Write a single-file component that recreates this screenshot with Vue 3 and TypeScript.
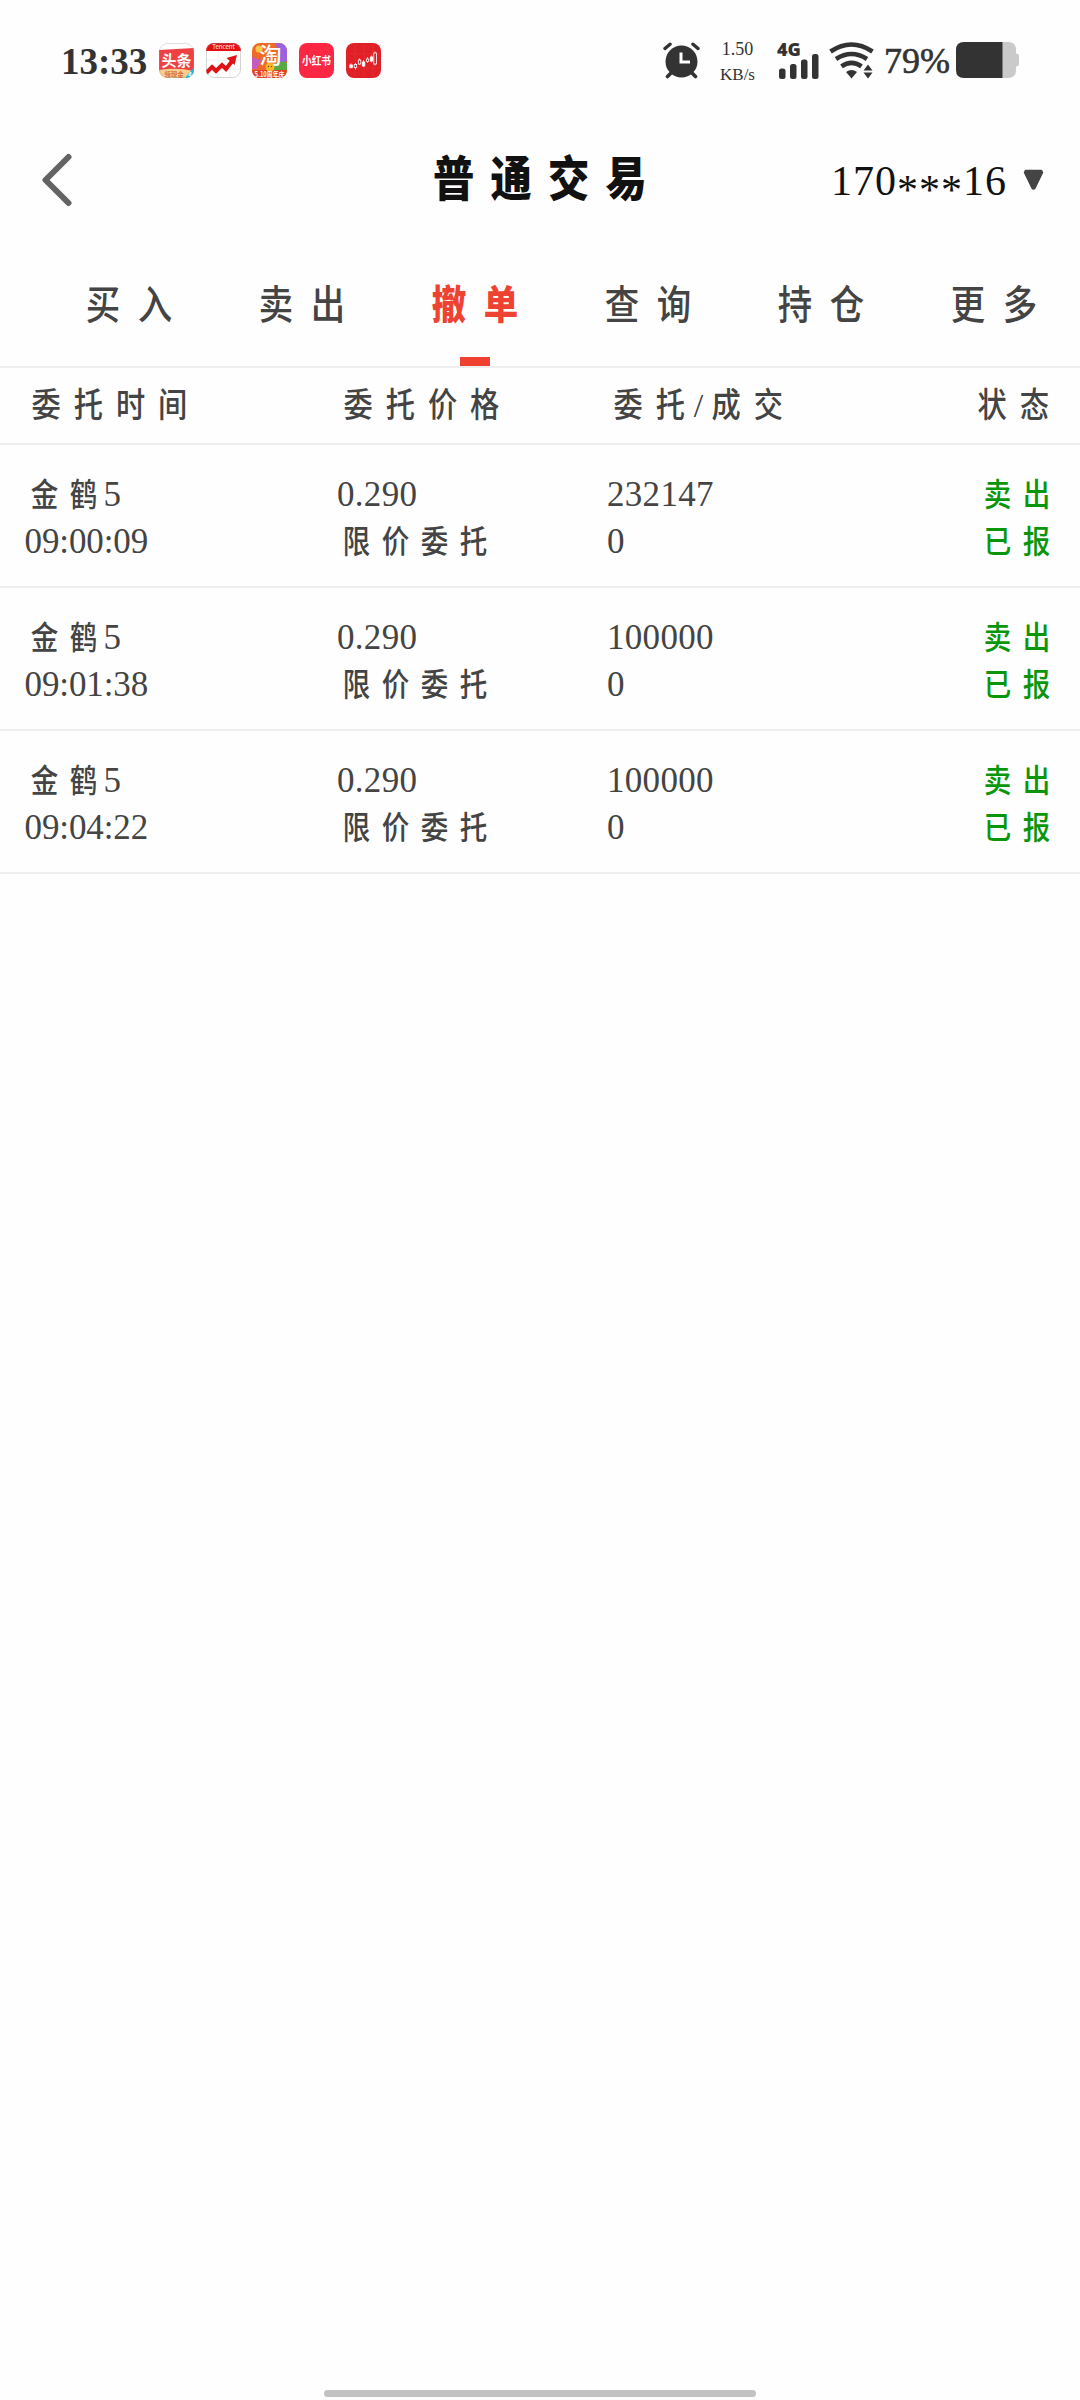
<script setup lang="ts">
import { defineComponent, h } from 'vue'

interface Order {
  name: string
  suffix: string
  time: string
  price: string
  kind: string
  amount: string
  filled: string
  side: string
  state: string
}

// Han text set on a fixed pitch, each glyph centred in its cell
const Han = defineComponent({
  props: { t: { type: String, required: true } },
  setup(props) {
    return () => h('span', { class: 'han', style: { '--n': props.t.length } }, props.t)
  },
})

const tabs: string[] = ['买入', '卖出', '撤单', '查询', '持仓', '更多']
const active = '撤单'

const base = { name: '金鹤', suffix: '5', price: '0.290', kind: '限价委托', filled: '0', side: '卖出', state: '已报' }
const orders: Order[] = [
  { ...base, time: '09:00:09', amount: '232147' },
  { ...base, time: '09:01:38', amount: '100000' },
  { ...base, time: '09:04:22', amount: '100000' },
]
</script>

<template>
  <div class="screen">
    <div class="status">
      <span class="clock">13:33</span>
      <div class="apps">
        <svg width="35" height="35" viewBox="0 0 35 35">
          <defs><clipPath id="r"><rect width="35" height="35" rx="8" /></clipPath></defs>
          <g clip-path="url(#r)">
            <rect width="35" height="35" fill="#fff" />
            <path d="M0 7L35 5V28H0Z" fill="#f04142" />
            <path d="M0 27Q17 24 35 28V35H0Z" fill="#f8cf8e" />
            <path d="M35 24L26 35H35Z" fill="#20b4dc" />
            <text x="17.5" y="22.5" text-anchor="middle" font-size="15" font-weight="700" fill="#fff">头条</text>
            <text x="15" y="33.5" text-anchor="middle" font-size="6.5" font-weight="700" fill="#d8703c">领现金</text>
            <text x="31" y="33.5" text-anchor="middle" font-size="6" font-weight="700" fill="#fff">4</text>
          </g>
          <rect x=".5" y=".5" width="34" height="34" rx="8" fill="none" stroke="#999" stroke-opacity=".3" />
        </svg>
        <svg width="35" height="35" viewBox="0 0 35 35">
          <g clip-path="url(#r)">
            <rect width="35" height="35" fill="#fff" />
            <path d="M12 8V35M24 8V35M0 17H35M0 26H35" stroke="#eee" />
            <rect width="35" height="8" fill="#e60f12" />
            <text x="17.5" y="6.2" text-anchor="middle" font-size="6" fill="#fff">Tencent</text>
            <path d="M0 30L6 24L10 28L16 22L20 26L27 17" fill="none" stroke="#e01216" stroke-width="4" />
            <path d="M31 12L20.500 15L28.500 22Z" fill="#e01216" />
          </g>
          <rect x=".5" y=".5" width="34" height="34" rx="8" fill="none" stroke="#888" stroke-opacity=".35" />
        </svg>
        <svg width="35" height="35" viewBox="0 0 35 35">
          <g clip-path="url(#r)">
            <rect width="35" height="35" fill="#ee6a26" />
            <path d="M24 0H35V18L27 21Z" fill="#9a62dc" />
            <path d="M0 14L9 17L5 26H0Z" fill="#c55cc0" />
            <circle cx="7" cy="6" r="3.500" fill="#f9c84a" />
            <path d="M21 23Q28 16 35 20V28H21Z" fill="#58a845" />
            <rect y="27" width="35" height="8" fill="#e2401f" />
            <circle cx="18" cy="24" r="4.500" fill="#fbb52a" />
            <circle cx="16.500" cy="23.500" r=".7" fill="#743" />
            <circle cx="19.500" cy="23.500" r=".7" fill="#743" />
            <text x="18.500" y="19.500" text-anchor="middle" font-size="22" font-weight="500" fill="#fff">淘</text>
            <text x="17.500" y="33.500" text-anchor="middle" font-size="7" font-weight="700" fill="#fff" textLength="30" lengthAdjust="spacingAndGlyphs">5.10周年庆</text>
          </g>
        </svg>
        <svg width="35" height="35" viewBox="0 0 35 35">
          <rect width="35" height="35" rx="8" fill="#fb2743" />
          <text x="17.500" y="21.700" text-anchor="middle" font-size="11" font-weight="700" fill="#fff" textLength="29" lengthAdjust="spacingAndGlyphs">小红书</text>
        </svg>
        <svg width="35" height="35" viewBox="0 0 35 35">
          <rect width="35" height="35" rx="8" fill="#df2026" />
          <path d="M9 1V34M18 1V34M27 1V34M1 11H34M1 25H34" stroke="#f04a4a" stroke-opacity=".35" stroke-width=".8" />
          <g stroke="#fff" stroke-width=".8">
            <path d="M5 20.500V25.500M9.500 20V26.500M13.500 15.500V22M17.500 17V24M21.500 14V20M25.500 12.500V19.500M29 8.500V22.500" />
            <rect x="3.800" y="22" width="2.600" height="2.500" fill="#fff" />
            <rect x="8.200" y="21.500" width="2.500" height="3" fill="#df2026" />
            <rect x="12.300" y="17" width="2.500" height="4" fill="#df2026" />
            <rect x="16.300" y="19" width="2.500" height="4" fill="#fff" />
            <rect x="20.300" y="16" width="2.500" height="2.500" fill="#df2026" />
            <rect x="24.300" y="14" width="2.500" height="4" fill="#fff" />
            <rect x="27.800" y="10" width="2.600" height="11" fill="#df2026" />
          </g>
        </svg>
      </div>
      <span class="spacer"></span>
      <svg class="alarm" width="37" height="37" viewBox="0 0 37 37" fill="none" stroke="#333" stroke-linecap="round">
        <circle cx="18.500" cy="19.500" r="16" fill="#333" stroke="none" />
        <path d="M2 6.500L7 2.200M35 6.500L30 2.200" stroke-width="3.400" />
        <path d="M8 31L4.500 34.500M29 31L32.500 34.500" stroke-width="3.600" />
        <path d="M18 10.500V20H27" stroke="#fff" stroke-width="3" stroke-linecap="butt" />
      </svg>
      <div class="speed"><span>1.50</span><span>KB/s</span></div>
      <div class="cell">
        <span class="net">4G</span>
        <svg width="42" height="26" viewBox="0 0 42 26" fill="#333">
          <rect x="2" y="15.500" width="6.500" height="10.500" rx="2.500" />
          <rect x="13" y="11" width="6.500" height="15" rx="2.500" />
          <rect x="24" y="6.500" width="6.500" height="19.500" rx="2.500" />
          <rect x="35" y="1" width="6.500" height="25" rx="2.500" />
        </svg>
      </div>
      <svg class="wifi" width="46" height="37" viewBox="0 0 46 37" fill="none" stroke="#333" stroke-width="4.600">
        <path d="M1.500 9.500Q22.500 -4.500 43.500 9.500" />
        <path d="M7 17Q22.500 7 38 17" />
        <path d="M12.500 24.300Q22.500 17.500 32.500 24.300" />
        <path d="M17 30Q22.500 26 28 30L22.500 36.500Z" fill="#333" stroke="none" />
        <path d="M39 22.500L43.500 28.500H34.500ZM34.500 30.500H43.500L39 36.500Z" fill="#333" stroke="none" />
      </svg>
      <span class="pct">79%</span>
      <svg class="batt" width="64" height="36" viewBox="0 0 64 36">
        <path d="M46 0H52Q60 0 60 8V11.500Q63 11.500 63 14.500V21.500Q63 24.500 60 24.500V28Q60 36 52 36H46Z" fill="#cacaca" />
        <path d="M8 0H46.500V36H8Q0 36 0 28V8Q0 0 8 0Z" fill="#333" />
      </svg>
    </div>

    <header class="bar">
      <svg class="back" width="32" height="54" viewBox="0 0 32 54"><path d="M27.500 4L4.500 27L27.500 50" fill="none" stroke="#636363" stroke-width="6" stroke-linecap="round" stroke-linejoin="round" /></svg>
      <h1><Han t="普通交易" /></h1>
      <div class="account">
        <span>170<span class="mask">***</span>16</span>
        <svg width="21" height="22" viewBox="0 0 21 22"><path d="M2.500 1.500H18.500L19.500 3.500L12 19Q10.500 21 9 19L1.500 3.500Z" fill="#444" stroke="#444" stroke-width="1.500" stroke-linejoin="round" /></svg>
      </div>
    </header>

    <nav class="tabs">
      <div v-for="t in tabs" :key="t" class="tab" :class="{ on: t === active }">
        <Han :t="t" />
        <i v-if="t === active"></i>
      </div>
    </nav>

    <div class="head">
      <div class="c1"><Han t="委托时间" /></div>
      <div class="c2"><Han t="委托价格" /></div>
      <div class="c3"><Han t="委托" /><span class="slash">/</span><Han t="成交" /></div>
      <div class="c4"><Han t="状态" /></div>
    </div>

    <div v-for="o in orders" :key="o.time" class="row">
      <div class="c1">
        <div class="line"><Han :t="o.name" /><span class="suffix">{{ o.suffix }}</span></div>
        <div class="line time">{{ o.time }}</div>
      </div>
      <div class="c2">
        <div class="line">{{ o.price }}</div>
        <div class="line"><Han :t="o.kind" /></div>
      </div>
      <div class="c3">
        <div class="line">{{ o.amount }}</div>
        <div class="line">{{ o.filled }}</div>
      </div>
      <div class="c4 green">
        <div class="line"><Han :t="o.side" /></div>
        <div class="line"><Han :t="o.state" /></div>
      </div>
    </div>

    <div class="home"></div>
  </div>
</template>

<style>
body {
  background: #fefefe;
}
</style>

<style scoped>
.screen {
  width: 1080px;
  height: 2400px;
  display: flex;
  flex-direction: column;
  background: #fefefe;
  color: #444;
  overflow: hidden;
  font-family: 'Liberation Serif', 'Noto Sans CJK SC', serif;
}
:deep(.han) {
  display: inline-block;
  width: calc(var(--n) * var(--pitch));
  white-space: nowrap;
  letter-spacing: calc(var(--pitch) / 0.86 - 1em);
  text-indent: calc((var(--pitch) / 0.86 - 1em) / 2);
  transform: scaleX(0.86);
  transform-origin: 0 50%;
}
.status {
  height: 120px;
  box-sizing: border-box;
  padding: 0 60px 0 61px;
  display: flex;
  align-items: center;
  color: #333;
  flex: none;
}
.clock {
  width: 98px;
  font-size: 37px;
  font-weight: 700;
  line-height: 40px;
  padding-top: 3px;
  box-sizing: border-box;
}
.apps {
  display: flex;
  gap: 11.7px;
}
.apps svg {
  display: block;
  font-family: 'Noto Sans CJK SC', sans-serif;
}
.spacer {
  flex: 1;
}
.speed {
  width: 35px;
  margin: 4px 0 0 20px;
  display: flex;
  flex-direction: column;
  align-items: center;
  font-size: 18px;
  line-height: 26px;
}
.speed span:last-child {
  font-size: 17px;
}
.cell {
  width: 42px;
  height: 37px;
  margin-left: 22px;
  position: relative;
}
.cell svg {
  display: block;
  margin-top: 11px;
}
.net {
  position: absolute;
  left: 0;
  top: -1px;
  font: 800 18px/16px 'Open Sans', sans-serif;
}
.wifi {
  margin-left: 10px;
}
.pct {
  width: 72px;
  margin-left: 9px;
  font-size: 36px;
  line-height: 40px;
  -webkit-text-stroke: 0.6px #333;
  padding-top: 2px;
}
.batt {
  flex: none;
}
.bar {
  height: 120px;
  flex: none;
  display: grid;
  grid-template-columns: 1fr auto 1fr;
  align-items: center;
  color: #111;
}
.back {
  margin-left: 41px;
}
h1 {
  --pitch: 57.5px;
  margin: 0;
  font-size: 48px;
  line-height: 60px;
  font-weight: 900;
}
.account {
  justify-self: end;
  display: flex;
  align-items: center;
  gap: 16px;
  padding-right: 36px;
  font-size: 42px;
  line-height: 50px;
  letter-spacing: 1px;
  padding-top: 6px;
}
.account svg {
  margin-bottom: 6px;
}
.mask {
  display: inline-block;
  line-height: 40px;
  vertical-align: -9px;
}
.tabs {
  height: 126px;
  flex: none;
  display: flex;
  padding-left: 42px;
  border-bottom: 2px solid #eee;
}
.tab {
  --pitch: 52px;
  width: 173px;
  display: flex;
  flex-direction: column;
  align-items: center;
  justify-content: space-between;
  padding-top: 36px;
  box-sizing: border-box;
  font-size: 40px;
  line-height: 60px;
  font-weight: 500;
}
.tab.on {
  color: #ee4233;
  font-weight: 800;
}
.tab i {
  width: 30px;
  height: 9px;
  background: #f04030;
}
.head {
  --pitch: 42.2px;
  height: 75px;
  flex: none;
  display: flex;
  padding: 0 24.500px;
  border-bottom: 2px solid #eee;
  font-size: 34px;
  line-height: 76px;
  font-weight: 500;
}
.slash {
  display: inline-block;
  width: 14px;
  text-align: center;
}
.c1 {
  width: 312.500px;
}
.c2 {
  width: 270px;
}
.c3 {
  flex: 1;
}
.row {
  --pitch: 39px;
  height: 143px;
  flex: none;
  box-sizing: border-box;
  display: flex;
  padding: 26px 24.500px 0;
  border-bottom: 2px solid #eee;
  font-size: 35px;
  line-height: 47px;
  letter-spacing: 0.3px;
}
.row :deep(.han) {
  font-size: 32px;
  font-weight: 500;
}
.suffix {
  margin-left: 1px;
}
.time {
  letter-spacing: -0.1px;
}
.line {
  height: 47px;
  white-space: nowrap;
}
.green {
  color: #0a960a;
}
.home {
  width: 432px;
  height: 7px;
  border-radius: 4px;
  background: #c2c2c2;
  margin: auto auto 3px;
}
</style>
